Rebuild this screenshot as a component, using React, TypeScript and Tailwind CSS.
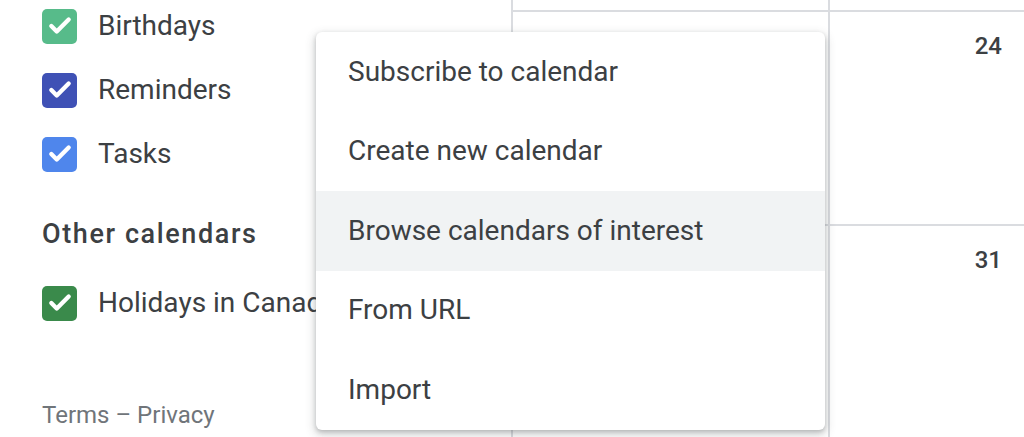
import { Check } from 'lucide-react';

const calendars = [
  { name: 'Birthdays', color: 'bg-[#57bb8a]' },
  { name: 'Reminders', color: 'bg-[#3f51b5]' },
  { name: 'Tasks', color: 'bg-[#4f86ec]' },
];

const menuItems = [
  'Subscribe to calendar',
  'Create new calendar',
  'Browse calendars of interest',
  'From URL',
  'Import',
];

const CalendarRow = ({ name, color }: { name: string; color: string }) => (
  <div className="flex h-[64px] items-center gap-[21px] pl-[42px]">
    <div className={`flex h-[35px] w-[35px] shrink-0 items-center justify-center rounded-[5px] ${color}`}>
      <Check className="h-[26px] w-[26px] text-white" strokeWidth={4} />
    </div>
    <span className="whitespace-nowrap text-[28px] text-[#3c4043]">{name}</span>
  </div>
);

const App = () => {
  return (
    <div
      className="relative flex h-[437px] w-[1024px] overflow-hidden bg-white"
      style={{ fontFamily: 'Roboto, "Liberation Sans", sans-serif' }}
    >
      {/* Sidebar */}
      <aside className="flex w-[511px] shrink-0 flex-col">
        <div className="mt-[-6px]">
          {calendars.map((c) => (
            <CalendarRow key={c.name} {...c} />
          ))}
        </div>
        <div className="h-[85px] pl-[42px] pt-[32px]">
          <p className="text-[27px] font-medium leading-[32px] tracking-[1.6px] text-[#3c4043]">Other calendars</p>
        </div>
        <CalendarRow name="Holidays in Canada" color="bg-[#3a8a4b]" />
        <p className="mt-[65px] pl-[42px] text-[24px] leading-[30px] text-[#70757a]">Terms – Privacy</p>
      </aside>

      {/* Month grid */}
      <div className="flex flex-1 border-l-2 border-[#dadce0]">
        <div className="flex w-[317px] flex-col border-r-2 border-[#dadce0]">
          <div className="h-[12px] border-b-2 border-[#dadce0]" />
          <div className="h-[214px] border-b-2 border-[#dadce0]" />
          <div className="flex-1" />
        </div>
        <div className="flex flex-1 flex-col">
          <div className="h-[12px] border-b-2 border-[#dadce0]" />
          <div className="flex h-[214px] justify-end border-b-2 border-[#dadce0] pr-[22px] pt-[22px]">
            <span className="text-[24px] font-medium leading-[24px] text-[#3c4043]">24</span>
          </div>
          <div className="flex flex-1 justify-end pr-[22px] pt-[22px]">
            <span className="text-[24px] font-medium leading-[24px] text-[#3c4043]">31</span>
          </div>
        </div>
      </div>

      {/* Add calendar menu */}
      <div className="absolute left-[316px] top-[32px] w-[509px] rounded-[6px] bg-white shadow-[0_4px_10px_2px_rgba(60,64,67,0.18),0_2px_4px_rgba(60,64,67,0.25)]">
        {menuItems.map((item, i) => (
          <div
            key={item}
            className={`flex h-[79.5px] items-center pl-[32px] text-[28px] text-[#3c4043] ${
              i === 2 ? 'bg-[#f1f3f4]' : ''
            }`}
          >
            {item}
          </div>
        ))}
      </div>
    </div>
  );
};

export default App;
